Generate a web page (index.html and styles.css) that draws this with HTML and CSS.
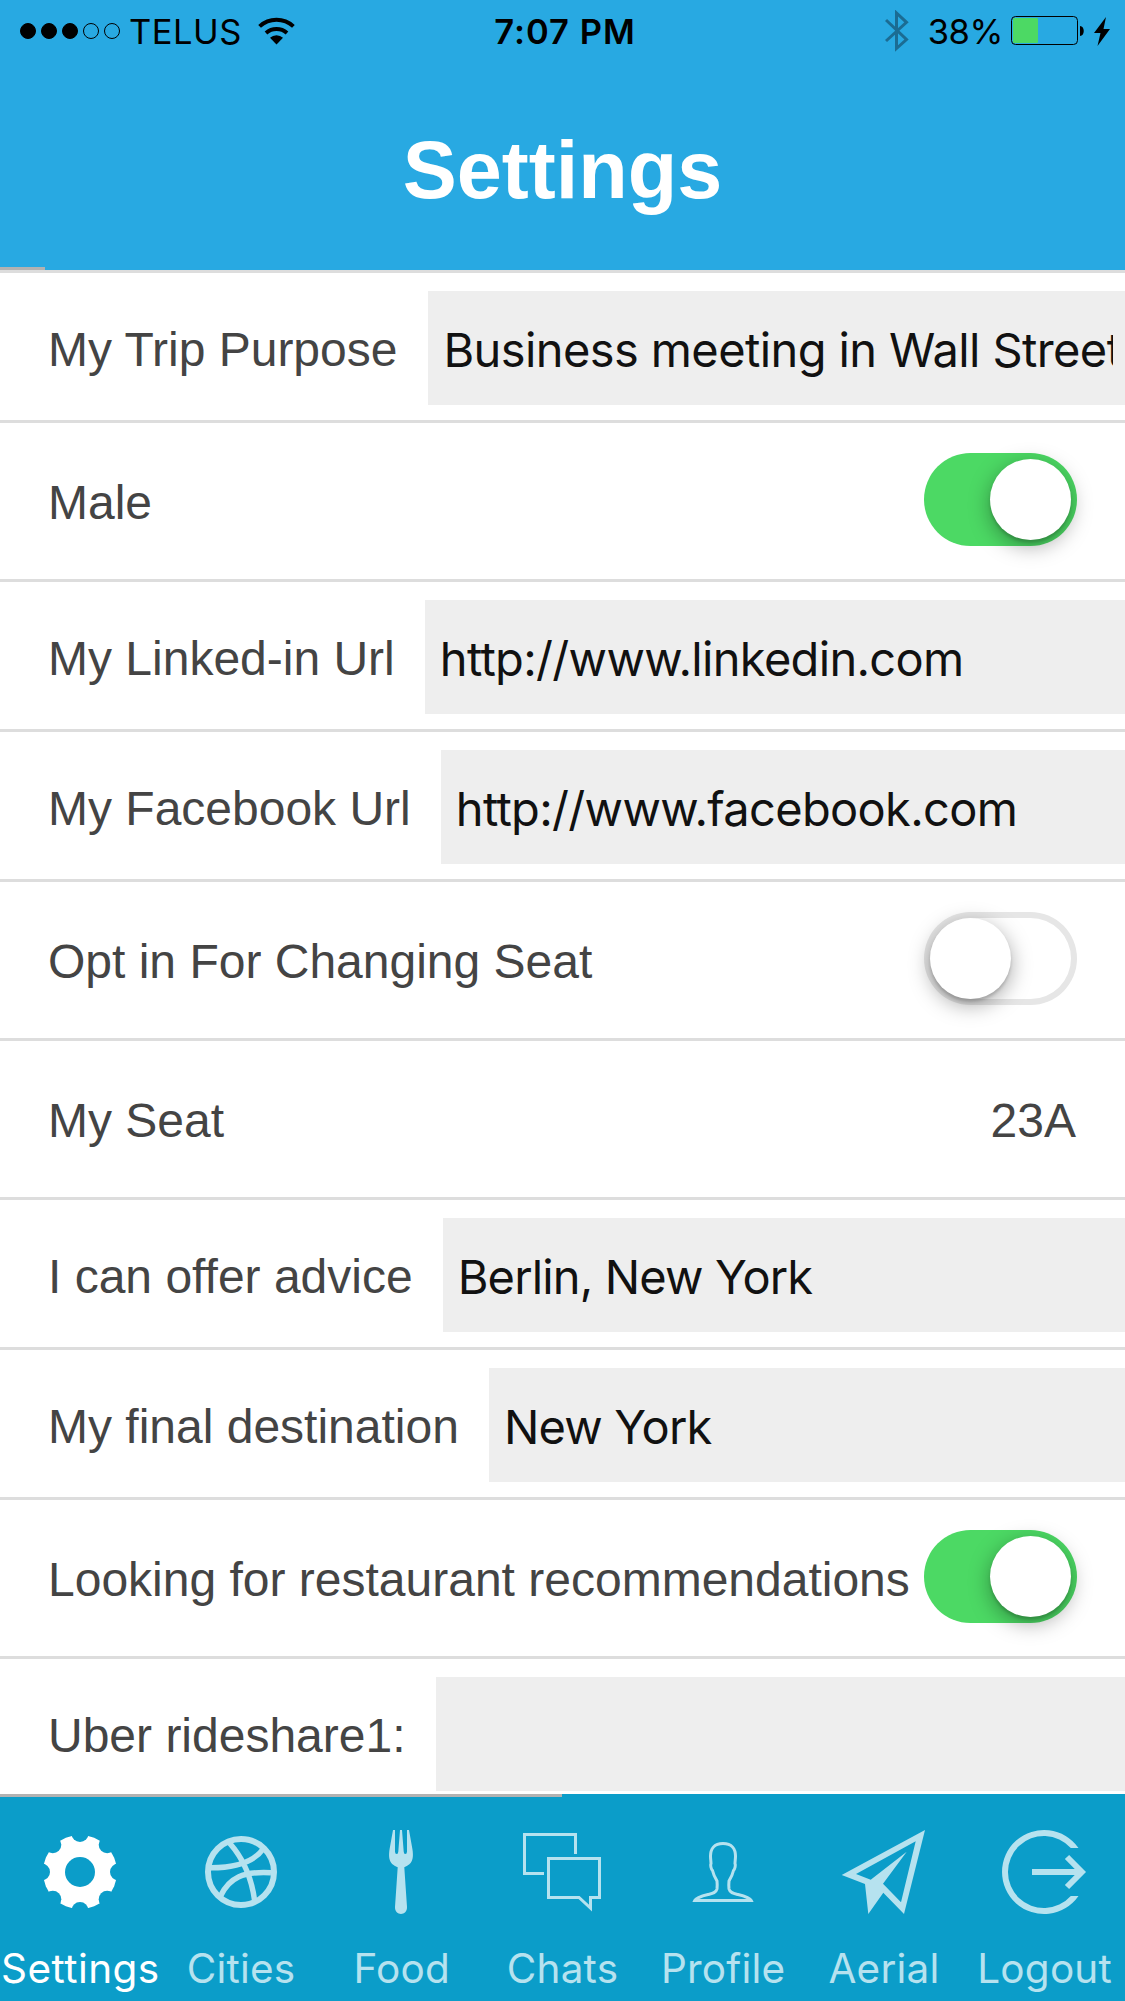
FILE: index.html
```html
<!DOCTYPE html>
<html lang="en">
<head>
<meta charset="utf-8">
<title>Settings</title>
<link rel="stylesheet" href="styles.css">
</head>
<body>
<div class="screen">
  <header class="header">
    <div class="status">
      <div class="status-left">
        <div class="signal"><i class="on"></i><i class="on"></i><i class="on"></i><i></i><i></i></div>
        <span class="carrier">TELUS</span>
        <svg class="wifi" width="38" height="28" viewBox="0 0 38 28">
          <path fill="none" stroke="#000" stroke-width="4" d="M1.6 9.4A25 25 0 0 1 35.4 9.4M8 16A16 16 0 0 1 29 16"/>
          <path d="M18.5 27.5L12 20.8A9.3 9.3 0 0 1 25 20.8Z"/>
        </svg>
      </div>
      <span class="clock">7:07 PM</span>
      <div class="status-right">
        <svg class="bluetooth" width="24" height="42" viewBox="0 0 24 42"><path d="M1 10L21.5 29.5L11.5 38.5V3L21.5 12.3L1 31"/></svg>
        <span class="percent">38%</span>
        <svg class="battery" width="74" height="30" viewBox="0 0 74 30">
          <rect x=".5" y=".5" width="66" height="28" rx="4" fill="none" stroke="#000"/>
          <rect x="2" y="2" width="25" height="25" rx="1" fill="#4cd964"/>
          <path d="M69 10C74 10 74 20 69 20Z"/>
        </svg>
        <svg class="bolt" width="16" height="29" viewBox="0 0 16 29"><path d="M12 0L0 16H6.5L3.5 29L16 12H9.5Z"/></svg>
      </div>
    </div>
    <h1 class="title">Settings</h1>
    <div class="header-progress"></div>
  </header>

  <main class="list">
    <label class="row row-field"><span class="label">My Trip Purpose</span><input class="field field-long" value="Business meeting in Wall Street"></label>
    <div class="row"><span class="label">Male</span><span class="toggle toggle-on"><i class="knob"></i></span></div>
    <label class="row row-field"><span class="label">My Linked-in Url</span><input class="field" value="http://www.linkedin.com"></label>
    <label class="row row-field"><span class="label">My Facebook Url</span><input class="field" value="http://www.facebook.com"></label>
    <div class="row"><span class="label">Opt in For Changing Seat</span><span class="toggle"><i class="knob"></i></span></div>
    <div class="row"><span class="label">My Seat</span><span class="value">23A</span></div>
    <label class="row row-field"><span class="label">I can offer advice</span><input class="field field-place" value="Berlin, New York"></label>
    <label class="row row-field"><span class="label">My final destination</span><input class="field field-place" value="New York"></label>
    <div class="row"><span class="label">Looking for restaurant recommendations</span><span class="toggle toggle-on"><i class="knob"></i></span></div>
    <label class="row row-field"><span class="label">Uber rideshare1:</span><input class="field" value=""></label>
  </main>

  <nav class="tabs">
    <div class="tabs-progress"></div>
    <a class="tab active">
      <svg class="icon" viewBox="0 0 96 96">
        <mask id="gear">
          <rect width="96" height="96" fill="#fff"/>
          <circle cx="48" cy="48" r="15"/>
          <circle cx="48" cy="9.5" r="8.5"/><circle cx="48" cy="86.5" r="8.5"/>
          <circle cx="9.5" cy="48" r="8.5"/><circle cx="86.5" cy="48" r="8.5"/>
          <circle cx="20.8" cy="20.8" r="8.5"/><circle cx="75.2" cy="20.8" r="8.5"/>
          <circle cx="20.8" cy="75.2" r="8.5"/><circle cx="75.2" cy="75.2" r="8.5"/>
        </mask>
        <circle cx="48" cy="48" r="37" fill="currentColor" mask="url(#gear)"/>
      </svg>
      <span>Settings</span>
    </a>
    <a class="tab">
      <svg class="icon" viewBox="0 0 96 96"><g fill="none" stroke="currentColor" stroke-width="6">
        <circle cx="48" cy="48" r="33"/>
        <path stroke-width="5.5" d="M36.5 19Q57 42 61.7 77M17 43.8Q57 44 70.5 24.5M27.5 72C36 54 50 47 78 48.7"/>
      </g></svg>
      <span>Cities</span>
    </a>
    <a class="tab">
      <svg class="icon nudge" viewBox="0 0 96 96"><path fill="currentColor" d="M40 6H42V27.5Q42 30 43.7 30Q45.2 30 45.3 27.5L47 6H49L50.7 27.5Q50.8 30 52.3 30Q54 30 54 27.5V6H56L59.4 25C61.5 38 57 40.5 51.3 43.3L54 83C54.3 92.3 41.7 92.3 42 83L44.7 43.3C39 40.5 34.5 38 36.6 25Z"/></svg>
      <span>Food</span>
    </a>
    <a class="tab">
      <svg class="icon" viewBox="0 0 96 96"><path fill="none" stroke="currentColor" stroke-width="3" d="M30 49.5H10.5V10.5H61.5V30M34.5 34.5H85.5V73.5H76.5V84L65 73.5H34.5Z"/></svg>
      <span>Chats</span>
    </a>
    <a class="tab">
      <svg class="icon" viewBox="0 0 96 96"><path fill="none" stroke="currentColor" stroke-width="3" d="M48 19.5C39 19.5 35.5 25 35.5 32C35.5 35 36 37 36 39.5C35.2 41 36 45 37.5 46.5C38.5 51 40 53.5 42 57C42.3 60 42.3 62 42 65C41 69 37 69.5 33 70.5C25 72.5 21 74 19.8 76.5H76.2C75 74 71 72.5 63 70.5C59 69.5 55 69 54 65C53.7 62 53.7 60 54 57C56 53.5 57.5 51 58.5 46.5C60 45 60.8 41 60 39.5C60 37 60.5 35 60.5 32C60.5 25 57 19.5 48 19.5Z"/></svg>
      <span>Profile</span>
    </a>
    <a class="tab">
      <svg class="icon nudge" viewBox="0 0 96 96"><path fill="currentColor" fill-rule="evenodd" d="M90 6L6.7 51L30 60L33.3 90L48.3 68.7L69 90ZM80.7 17.3L21 50L35.7 55.7L71.7 27.7L48 59.7L66 78.3Z"/></svg>
      <span>Aerial</span>
    </a>
    <a class="tab">
      <svg class="icon nudge" viewBox="0 0 96 96"><path fill="currentColor" d="M82.5 24A42 42 0 1 0 82.5 72H74.8A36 36 0 1 1 74.8 24Z"/><path fill="none" stroke="currentColor" stroke-width="6" d="M36 48H84M71 33L85.8 48L71 63"/></svg>
      <span>Logout</span>
    </a>
  </nav>
</div>
</body>
</html>
```
FILE: styles.css
```css
* { box-sizing: border-box; }
body { margin: 0; }
.screen {
  width: 1125px;
  height: 2001px;
  display: flex;
  flex-direction: column;
  overflow: hidden;
  background: #fff;
  font-family: "Liberation Sans", Arial, sans-serif;
}

/* Header and status bar */
.header {
  flex: none;
  height: 270px;
  display: flex;
  flex-direction: column;
  background: #28a9e2;
}
.status {
  height: 60px;
  display: grid;
  grid-template-columns: 1fr auto 1fr;
  align-items: center;
  padding: 0 15px 0 20px;
  font-family: Inter, sans-serif;
  font-size: 34.5px;
  line-height: 60px;
  color: #000;
}
.status-left, .status-right { display: flex; align-items: center; height: 60px; }
.status-right { justify-content: flex-end; }
.signal { display: flex; gap: 5px; }
.signal i { width: 16px; height: 16px; border: 1px solid #000; border-radius: 50%; }
.signal .on { background: #000; }
.carrier { margin: 2px 0 0 9px; letter-spacing: .5px; }
.wifi { margin-left: 16px; }
.clock { font-weight: 600; padding-top: 2px; letter-spacing: 1px; }
.bluetooth { fill: none; stroke: #1b6c93; stroke-width: 3; }
.percent { margin: 2px 8px 0 19px; letter-spacing: -.4px; }
.bolt { margin-left: 9px; }
.title {
  flex: 1;
  margin: 0;
  padding-top: 64px;
  text-align: center;
  font-size: 81px;
  line-height: 93px;
  font-weight: 700;
  color: #fff;
}
.header-progress { width: 45px; height: 3px; background: #b2b2b2; }

/* Settings list */
.list { flex: 1; min-height: 0; overflow: hidden; }
.row {
  display: flex;
  justify-content: space-between;
  height: 159px;
  padding: 30px 48px 33px;
  border-top: 3px solid #ddd;
  font-size: 48px;
  color: #444;
}
.row-field { height: 150px; padding: 18px 0 15px 48px; gap: 30px; justify-content: flex-start; }
.label, .value { flex: none; line-height: 54px; padding-top: 23px; white-space: nowrap; }
.value { margin-right: 1px; }
.row-field .label { padding-top: 32px; }
.field {
  flex: 1;
  min-width: 0;
  height: 114px;
  padding: 2px 12px 0 15px;
  border: 0;
  border-radius: 0;
  background: #eee;
  font: 47px Inter, sans-serif;
  letter-spacing: -.68px;
  color: #111;
}
.field-long { margin-left: 1px; letter-spacing: -.6px; }
.field-place { letter-spacing: -.85px; }
.toggle {
  flex: none;
  width: 153px;
  height: 93px;
  padding: 6px;
  border-radius: 47px;
  background: #fff;
  box-shadow: inset 0 0 0 6px #e6e6e6;
}
.toggle-on { padding-left: 66px; background: #4cd964; box-shadow: none; }
.knob {
  display: block;
  width: 81px;
  height: 81px;
  border-radius: 50%;
  background: #fff;
  box-shadow: 0 6px 21px rgba(0, 0, 0, .35), 0 3px 3px rgba(0, 0, 0, .15);
}

/* Bottom tab bar */
.tabs {
  position: relative;
  flex: none;
  height: 207px;
  display: grid;
  grid-template-columns: repeat(7, 1fr);
  background: #0b9dc9;
}
.tabs-progress { position: absolute; left: 0; top: 0; width: 562px; height: 3px; background: #b2b2b2; }
.tab {
  display: flex;
  flex-direction: column;
  align-items: center;
  padding-top: 30px;
  font: 40.5px/48px Inter, sans-serif;
  letter-spacing: .2px;
  color: #b6e2ef;
  white-space: nowrap;
}
.tab span { margin-top: 25px; }
.tab.active { color: #fff; letter-spacing: .45px; }
.icon { flex: none; width: 96px; height: 96px; }
.nudge { margin-left: -2px; }
```
